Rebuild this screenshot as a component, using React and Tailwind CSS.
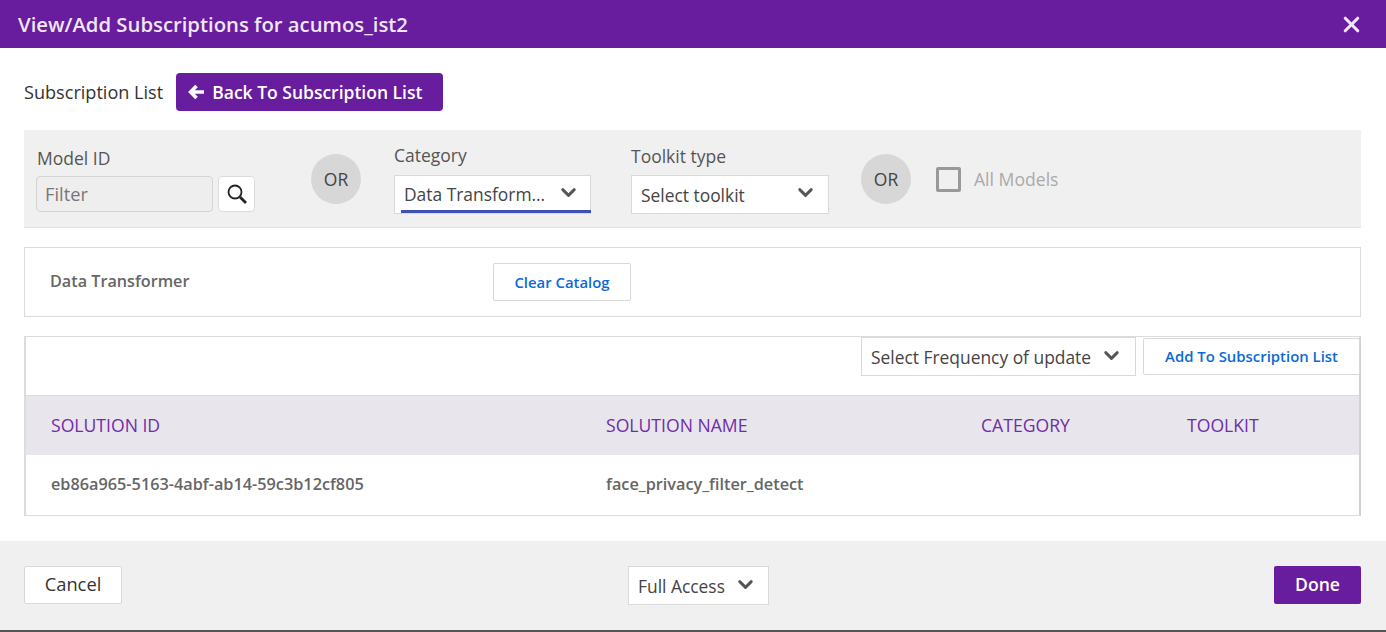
import { ChevronDown, X } from 'lucide-react';

const PURPLE = 'bg-[#671d9d]';

function Select({ label, className = '', textClass = 'mt-[2px]', chevronClass = '' }) {
  return (
    <div className={`flex items-center justify-between bg-white border border-[#d9d9d9] text-[#444] ${className}`}>
      <span className={`text-[17.4px] leading-none whitespace-nowrap ${textClass}`}>{label}</span>
      <ChevronDown size={23} strokeWidth={3} className={`text-[#555] shrink-0 ${chevronClass}`} />
    </div>
  );
}

function OrBadge() {
  return (
    <div className="w-[50px] h-[50px] rounded-full bg-[#d8d7d8] flex items-center justify-center pt-[2px] text-[17.5px] text-[#444] shrink-0">
      OR
    </div>
  );
}

export default function App() {
  return (
    <div className="w-[1386px] h-[632px] overflow-hidden bg-white flex flex-col font-['Open_Sans',sans-serif]">
      {/* Title bar */}
      <div className={`${PURPLE} h-12 shrink-0 flex items-center justify-between pl-[18px] pr-[22px]`}>
        <h1 className="text-[20.3px] font-semibold text-[#f0e6f7]">View/Add Subscriptions for acumos_ist2</h1>
        <X size={25} strokeWidth={3} className="text-[#f0e6f7]" />
      </div>

      <div className="flex-1 px-6">
        <div className="flex items-center gap-[13px] mt-[25px] h-[38px]">
          <span className="text-[18.1px] text-[#333] pt-[2px]">Subscription List</span>
          <button className={`${PURPLE} h-[38px] w-[267px] rounded-sm flex items-center pl-3 gap-2 text-white text-[17.5px] font-semibold`}>
            <svg width="16" height="16" viewBox="0 0 16 16" fill="none" stroke="currentColor" strokeWidth="3.6">
              <path d="M8.5 2L2.6 8l5.9 6M3 8h13" />
            </svg>
            Back To Subscription List
          </button>
        </div>

        {/* Filters */}
        <div className="mt-[19px] h-[98px] w-[1337px] bg-[#f0f0f0] border-b border-[#e2e2e2] flex items-center pl-3 relative">
          <div className="w-[275px] shrink-0">
            <div className="text-[17.5px] text-[#555] leading-6 mb-[6px] pl-[1px]">Model ID</div>
            <div className="flex gap-[5px]">
              <div className="w-[177px] h-9 rounded-[4px] bg-[#eeeeee] border border-[#d4d4d4] px-2 flex items-center text-[18.3px] text-[#777]">Filter</div>
              <div className="w-[37px] h-9 rounded-[4px] bg-white border border-[#dcdcdc] flex items-center justify-center">
                <svg width="24" height="24" viewBox="0 0 24 24" fill="none" stroke="#222">
                  <circle cx="10" cy="10" r="6.5" strokeWidth="1.8" />
                  <path d="M15 15l6 6" strokeWidth="2.8" />
                </svg>
              </div>
            </div>
          </div>
          <OrBadge />
          <div className="ml-[33px] w-[197px] shrink-0">
            <div className="text-[17.5px] text-[#555] leading-6 mb-2">Category</div>
            <div className="relative">
              <Select label="Data Transform..." className="h-[39px] pl-[9px] pr-[10px]" textClass="" chevronClass="-mt-[4px]" />
              <div className="absolute left-[7px] right-0 bottom-[1px] h-[3px] bg-[#3f51b5]" />
            </div>
          </div>
          <div className="ml-10 w-[198px] shrink-0">
            <div className="text-[17.5px] text-[#555] leading-6 mb-[7px]">Toolkit type</div>
            <Select label="Select toolkit" className="h-[39px] pl-[9px] pr-[11px]" textClass="mt-[4px]" chevronClass="-mt-[4px]" />
          </div>
          <div className="ml-[32px]"><OrBadge /></div>
          <div className="ml-[25px] mt-[2px] w-[25px] h-[25px] rounded-[2px] border-[3px] border-[#999] shrink-0" />
          <span className="ml-[13px] mt-[2px] text-[17.6px] text-[#aaa]">All Models</span>
        </div>

        {/* Selected catalog */}
        <div className="mt-[19px] h-[70px] w-[1337px] border border-[#dcdcdc] flex items-center relative">
          <span className="ml-[25px] w-[443px] text-[16.2px] font-semibold text-[#666] -mt-[2px]">Data Transformer</span>
          <button className="w-[138px] h-[38px] rounded-[2px] border border-[#d9d9d9] text-[14.9px] font-semibold text-[#0b6bd6]">Clear Catalog</button>
        </div>

        {/* Results */}
        <div className="mt-[19px] h-[180px] w-[1337px] border border-[#dcdcdc] border-r-[2px] border-l-[2px] border-r-[#d2d2d2] flex flex-col">
          <div className="h-[58px] flex justify-end gap-[7px] -mr-[1px]">
            <Select label="Select Frequency of update" className="w-[275px] h-[39px] pl-[9px] pr-[12px]" chevronClass="-mt-[3px]" />
            <button className="w-[217px] h-[37px] mt-[1px] rounded-[2px] bg-white border border-[#d9d9d9] text-[14.9px] font-semibold text-[#0b6bd6]">
              Add To Subscription List
            </button>
          </div>
          <div className="h-[60px] bg-[#e8e5ec] border-t border-[#dcdcdc] grid grid-cols-[555px_375px_206px_1fr] items-center pl-[25px] text-[17.6px] text-[#6f2da8]">
            <span>SOLUTION ID</span>
            <span>SOLUTION NAME</span>
            <span>CATEGORY</span>
            <span>TOOLKIT</span>
          </div>
          <div className="flex-1 grid grid-cols-[555px_375px_206px_1fr] items-center pl-[25px] pb-[2px] text-[16.25px] font-semibold text-[#666]">
            <span>eb86a965-5163-4abf-ab14-59c3b12cf805</span>
            <span>face_privacy_filter_detect</span>
          </div>
        </div>
      </div>

      {/* Footer */}
      <div className="h-[91px] shrink-0 bg-[#f0f0f0] border-b-2 border-[#555] flex items-center justify-between pl-6 pr-[25px] relative">
        <button className="w-[98px] h-[38px] rounded-[2px] bg-white border border-[#d9d9d9] pb-[2px] text-[18.3px] font-medium text-[#333] -mt-[2px]">Cancel</button>
        <Select label="Full Access" className="absolute left-[628px] top-[25px] w-[141px] h-[39px] pl-[9px] pr-[11px]" chevronClass="-mt-[3px]" />
        <button className={`${PURPLE} w-[87px] h-[38px] rounded-[2px] text-white text-[17.6px] font-semibold -mt-[2px]`}>Done</button>
      </div>
    </div>
  );
}
